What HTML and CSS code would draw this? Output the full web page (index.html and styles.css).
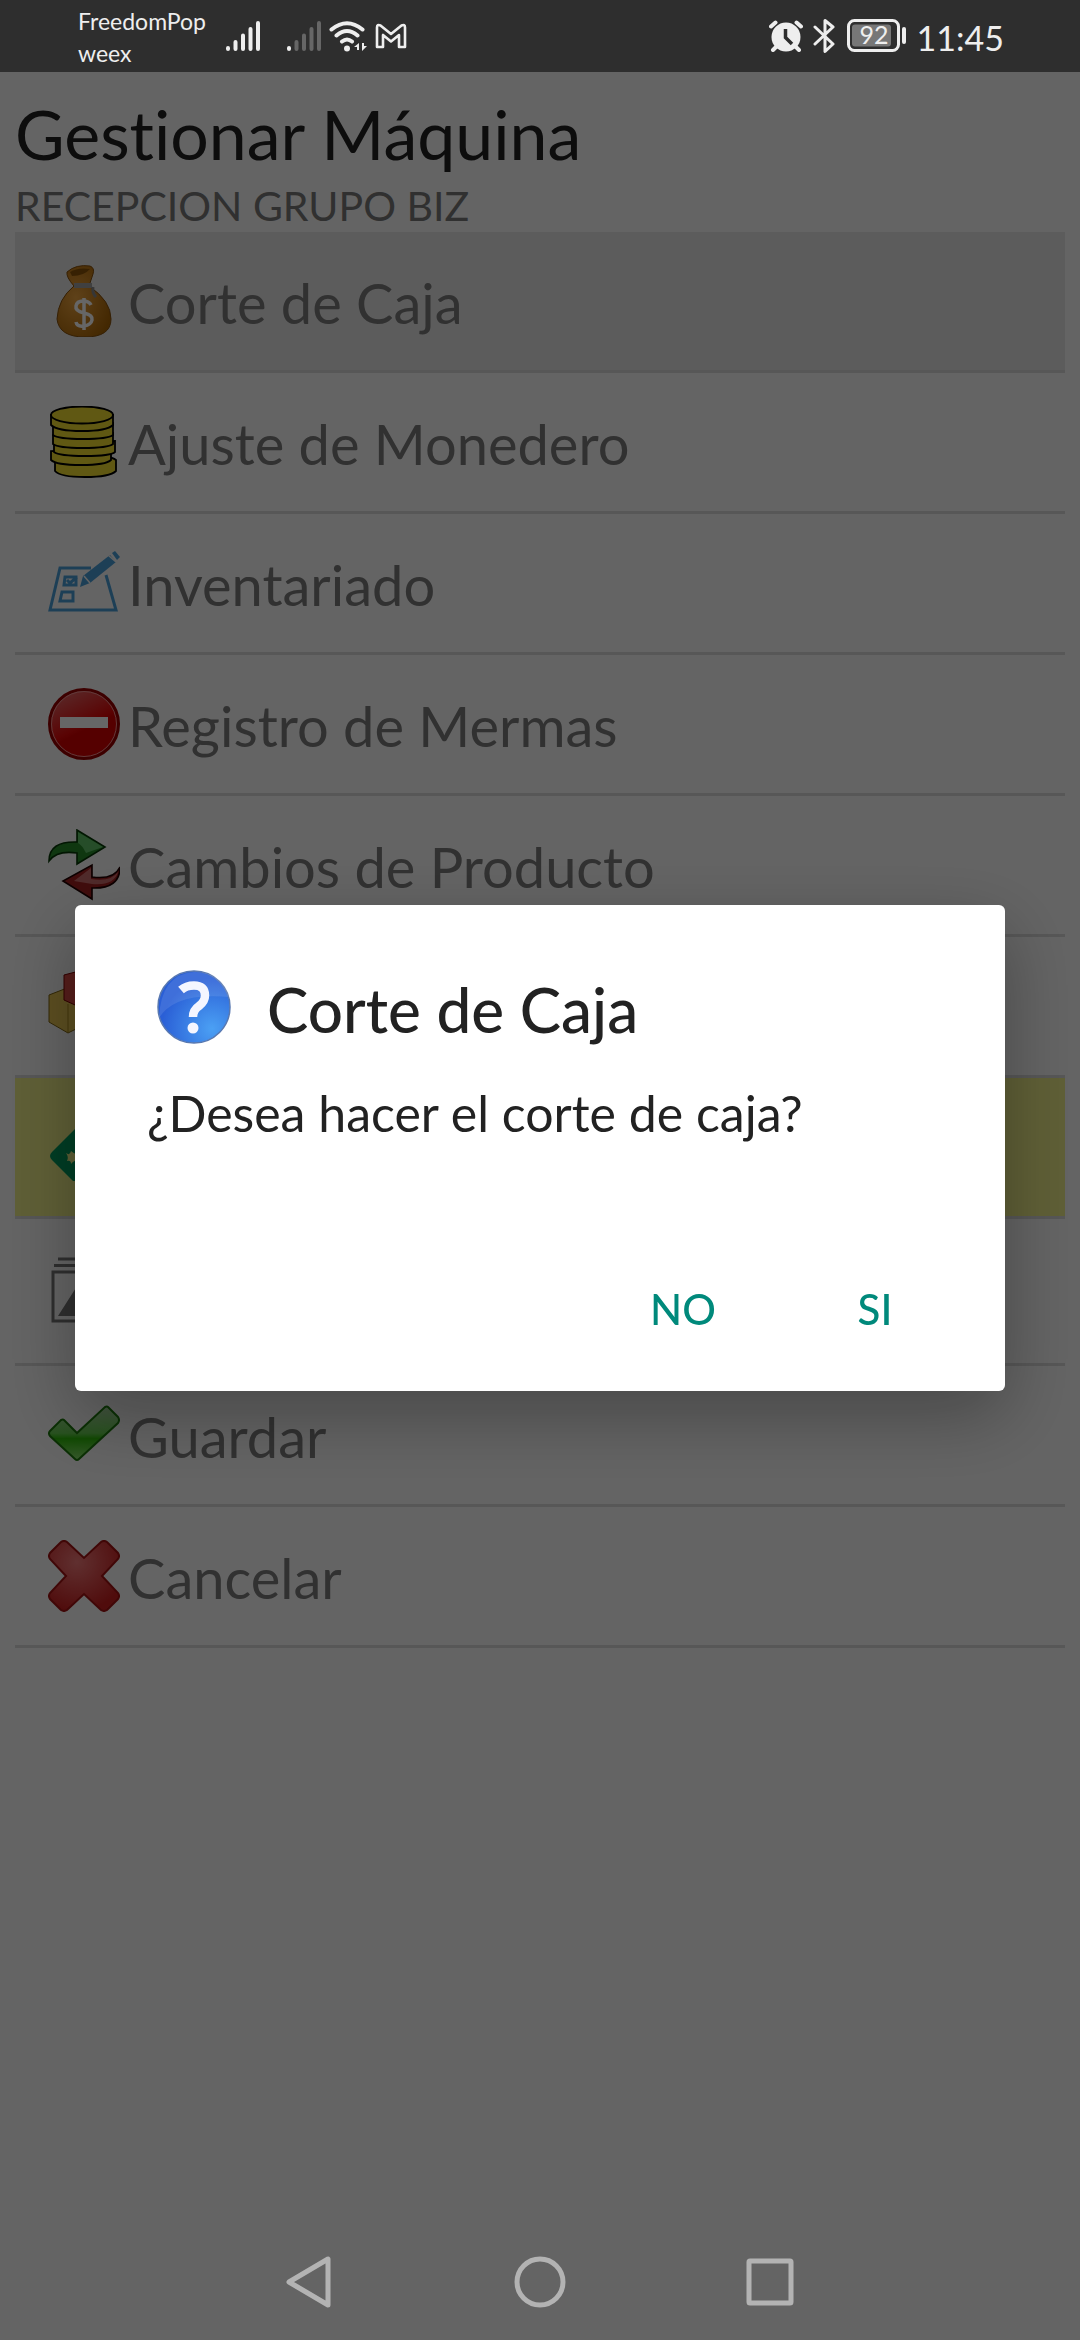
FILE: index.html
```html
<!DOCTYPE html>
<html lang="es">
<head>
<meta charset="utf-8">
<meta name="viewport" content="width=device-width, initial-scale=1">
<title>Gestionar Máquina</title>
<link rel="stylesheet" href="styles.css">
</head>
<body>
<header class="status">
  <div class="status-group">
    <p class="carrier">FreedomPop<br>weex</p>
    <svg class="signal" width="34" height="32" viewBox="0 0 34 32" fill="none" stroke="#eee" stroke-width="4" stroke-linecap="round"><path d="M2 28v1M9.500 22v7M17 15.500V29M24.500 9v20M32 3v26"/></svg>
    <svg class="signal signal-weak" width="34" height="32" viewBox="0 0 34 32" fill="none" stroke="#666" stroke-width="4" stroke-linecap="round"><path d="M2 28v1" stroke="#eee"/><path d="M9.500 22v7M17 15.500V29M24.500 9v20M32 3v26"/></svg>
    <svg class="wifi" width="38" height="32" viewBox="0 0 38 32" fill="none" stroke="#eee" stroke-width="4" stroke-linecap="round"><path d="M2.500 9.500Q18 -3 33.500 9.500M7.500 15.500Q18 6.500 28.500 15.500M13 21.500q5-4 10 0"/><circle cx="18" cy="28.500" r="3" fill="#eee" stroke="none"/><path d="M25 27l5-4v7h-2v-3zM38 26l-5 5v-8h2v3z" fill="#eee" stroke="none"/></svg>
    <svg class="mail" width="32" height="26" viewBox="0 0 32 26" fill="none" stroke="#eee" stroke-width="2.600" stroke-linejoin="round"><path d="M2 24V4.500Q2 1 5.500 2.500L16 11 26.500 2.500Q30 1 30 4.500V24h-6V12l-8 6.500L8 12v12z"/></svg>
  </div>
  <div class="status-group">
    <svg class="alarm" width="34" height="32" viewBox="0 0 34 32"><circle cx="17" cy="17" r="14.500" fill="#eee"/><path d="M2 6.500L6.500 2.500M32 6.500L27.500 2.500M7 27l-3 3M27 27l3 3" stroke="#eee" stroke-width="4" stroke-linecap="round"/><path d="M16.500 9v8.500l6.500 6.500" stroke="#2e2e2e" stroke-width="3.500" fill="none"/></svg>
    <svg class="bluetooth" width="22" height="36" viewBox="0 0 22 36" fill="none" stroke="#eee" stroke-width="3" stroke-linejoin="round" stroke-linecap="round"><path d="M2 9l18 17-8 7.500V2.500L20 9 2 26"/></svg>
    <svg class="battery" width="60" height="34" viewBox="0 0 60 34"><rect x="1.500" y="1.500" width="50" height="30" rx="6" fill="none" stroke="#eee" stroke-width="3"/><rect x="5" y="5.500" width="39" height="22" rx="3" fill="#777"/><rect x="55" y="8" width="4" height="17" rx="2" fill="#eee"/><text x="27" y="25" class="battery-level">92</text></svg>
    <time class="clock">11:45</time>
  </div>
</header>

<main class="app">
  <h1 class="title">Gestionar Máquina</h1>
  <p class="subtitle">RECEPCION GRUPO BIZ</p>
  <ul class="menu">
    <li class="item item-pressed"><button class="item-button" type="button">
      <svg class="icon" viewBox="0 0 72 72"><defs><radialGradient id="bag" cx=".35" cy=".45" r=".7"><stop offset="0" stop-color="#eda440"/><stop offset="1" stop-color="#a86404"/></radialGradient></defs><path d="M19 7Q28-1 42 1q5 2 3 8l-4 12q22 15 22 33 0 18-26 18T9 54q1-20 17-33Q18 12 19 7z" fill="url(#bag)" stroke="#85500e"/><path d="M22 7q8-5 20-3-6 7-18 7z" fill="#8a5408"/><path d="M26 18h18v5H26z" fill="#a0a0a0"/><path d="M45 22q-1 6 3 10" stroke="#888" stroke-width="3" fill="none"/><path d="M43 40q-2-4-8-4t-7 5 8 7 8 7-8 6-8-4M36 33v32" fill="none" stroke="#fff" stroke-width="3.500"/></svg>
      <span class="label">Corte de Caja</span></button></li>
    <li class="item"><button class="item-button" type="button">
      <svg class="icon" viewBox="0 0 72 72" fill="#f0dc30" stroke="#000" stroke-width="1.800"><path d="M7 56v9q5 6 30 6t31-6V54q-6-5-31-5T7 56z"/><path d="M3 45v9q5 5 30 5t30-5V43z"/><path d="M6 37v9q5 4 31 4t30-4V35z"/><path d="M5 29v9q5 4 30 4t30-4V27z"/><path d="M5 19v10q5 4 30 4t30-4V17z"/><path d="M3 9v10q6 6 31 6t31-6V9z"/><ellipse cx="34" cy="9" rx="31" ry="8.500"/></svg>
      <span class="label">Ajuste de Monedero</span></button></li>
    <li class="item"><button class="item-button" type="button">
      <svg class="icon" viewBox="0 0 72 72" fill="none" stroke="#4a9fd8" stroke-width="3"><path d="M43 21H12L2 63h66L58 28"/><path d="M17 30h11v8H16zM14 45h11v9H12zM19 33l3 3 7-6"/><path d="M32 40l3-11L62 8l6 7-26 21z" fill="#4a9fd8" stroke="none"/><path d="M64 6l3-2 5 6-3 3z" fill="#4a9fd8" stroke="none"/><path d="M36 29l6 7M60 8l8 7" stroke="#fafafa" stroke-width="1.500"/></svg>
      <span class="label">Inventariado</span></button></li>
    <li class="item"><button class="item-button" type="button">
      <svg class="icon" viewBox="0 0 72 72"><defs><linearGradient id="stop" x1=".2" y1="0" x2=".5" y2=".6"><stop offset="0" stop-color="#e06a6a"/><stop offset=".9" stop-color="#e00808"/><stop offset="1" stop-color="#d40000"/></linearGradient></defs><circle cx="36" cy="36" r="34.500" fill="url(#stop)" stroke="#980000" stroke-width="3"/><circle cx="36" cy="36" r="32.500" fill="none" stroke="#f09090"/><path d="M12 29h48v11H12z" fill="#fff"/></svg>
      <span class="label">Registro de Mermas</span></button></li>
    <li class="item"><button class="item-button" type="button">
      <svg class="icon" viewBox="0 0 72 72" stroke-width="1.600"><path d="M1 32Q1 12 29 13V1l28 17-28 17V24Q9 21 1 32z" fill="#268a2a" stroke="#063806"/><path d="M30 3l25 15-17 6q-4-8-8-10z" fill="#5fc066"/><path d="M72 38q0 22-28 21v11L15 52l29-16v12q22 3 28-10z" fill="#a02020" stroke="#200000"/><path d="M43 39v11q20 3 27-7-4 14-26 12L26 52z" fill="#c86a6a" stroke="none"/></svg>
      <span class="label">Cambios de Producto</span></button></li>
    <li class="item"><button class="item-button" type="button" aria-label="Productos">
      <svg class="icon" viewBox="0 0 72 72"><path d="M1 25l18-7 19 8v28l-18 9L1 52z" fill="#e6c452" stroke="#7f6410"/><path d="M20 34v28" stroke="#a8861c"/><path d="M16 5L35 0l20 7v26l-19 6-20-9z" fill="#d84a44" stroke="#7a0000"/></svg>
    </button></li>
    <li class="item item-marked"><button class="item-button" type="button" aria-label="Mantenimiento">
      <svg class="icon" viewBox="0 0 72 72"><path d="M4 41L32 13q4-4 8 0l28 28q4 4 0 8L47 70H25L4 49q-4-4 0-8z" fill="#009a5c"/><path d="M18 42q4 3 5-2 5 4 8 4v5q-5 0-8 4 0-4-4-3 2-4-1-8z" fill="#eeee88"/></svg>
    </button></li>
    <li class="item item-tall"><button class="item-button" type="button" aria-label="Imágenes">
      <svg class="icon" viewBox="0 0 72 72" fill="none" stroke="#757575" stroke-width="3"><path d="M10 4h52M6 10.500h60M5 17h62v49H5z"/><path d="M10 61l21-33 12 19 7-9 14 23z" fill="#757575" stroke="none"/></svg>
    </button></li>
    <li class="item"><button class="item-button" type="button">
      <svg class="icon" viewBox="0 0 72 72"><defs><linearGradient id="ok" x1="0" y1="0" x2="0" y2="1"><stop offset="0" stop-color="#a8d0a0"/><stop offset=".5" stop-color="#66cc50"/><stop offset=".6" stop-color="#2cb808"/><stop offset="1" stop-color="#8ce070"/></linearGradient></defs><path d="M2 32l11-11q2-1 3 0l13 13L57 8q2-1 3 0l10 10q2 3 0 6L31 60q-2 2-4 0L2 37q-2-3 0-5z" fill="url(#ok)" stroke="#1c780c" stroke-width="2"/></svg>
      <span class="label">Guardar</span></button></li>
    <li class="item"><button class="item-button" type="button">
      <svg class="icon" viewBox="0 0 72 72"><defs><radialGradient id="no" cx=".4" cy=".3" r=".7"><stop offset="0" stop-color="#f07878"/><stop offset="1" stop-color="#c82020"/></radialGradient></defs><path d="M13 2q3-2 6 0l17 16L53 2q3-2 6 0l11 11q2 3 0 6L54 36l16 17q2 3 0 6L59 70q-3 2-6 0L36 54 19 70q-3 2-6 0L2 59q-2-3 0-6l16-17L2 19q-2-3 0-6z" fill="url(#no)" stroke="#a01212" stroke-width="2"/></svg>
      <span class="label">Cancelar</span></button></li>
  </ul>
</main>

<div class="scrim">
  <section class="dialog" role="alertdialog" aria-modal="true" aria-labelledby="dialog-title" aria-describedby="dialog-text">
    <div class="dialog-head">
      <svg class="dialog-icon" viewBox="0 0 74 74"><defs><radialGradient id="ask" cx=".75" cy=".8" r=".7"><stop offset="0" stop-color="#4ba0f4"/><stop offset="1" stop-color="#2a5fd6"/></radialGradient></defs><circle cx="37" cy="37" r="36" fill="url(#ask)" stroke="#5878b0" stroke-width="1.500"/><path d="M2 48Q18 22 72 27 66 2 37 2 4 4 2 48z" fill="#fff" opacity=".1"/><path d="M24 20q5-4.500 13-4.500 11 0 11 10 0 6-6 10.500-6 4-6 11" fill="none" stroke="#f4f6ff" stroke-width="8.500"/><circle cx="36" cy="58" r="5.500" fill="#f4f6ff"/></svg>
      <h2 class="dialog-title" id="dialog-title">Corte de Caja</h2>
    </div>
    <p class="dialog-text" id="dialog-text">¿Desea hacer el corte de caja?</p>
    <div class="dialog-actions">
      <button class="action" type="button">NO</button>
      <button class="action" type="button">SI</button>
    </div>
  </section>
</div>

<nav class="navbar" aria-label="Sistema">
  <button class="nav-button" type="button" aria-label="Atrás"><svg width="52" height="52" viewBox="0 0 52 52"><path d="M5 26L44 3v46z"/></svg></button>
  <button class="nav-button" type="button" aria-label="Inicio"><svg width="52" height="52" viewBox="0 0 52 52"><circle cx="26" cy="26" r="23"/></svg></button>
  <button class="nav-button" type="button" aria-label="Recientes"><svg width="52" height="52" viewBox="0 0 52 52"><rect x="5" y="5" width="42" height="42" rx="1"/></svg></button>
</nav>
</body>
</html>
```

FILE: styles.css
```css
* {
  box-sizing: border-box;
}

body {
  margin: 0;
  min-height: 100vh;
  display: flex;
  flex-direction: column;
  background: #fafafa;
  font-family: Lato, "Open Sans", sans-serif;
  font-variant-ligatures: none;
}

h1, h2, p, ul {
  margin: 0;
  padding: 0;
  font-weight: 400;
}

button {
  border: 0;
  padding: 0;
  background: none;
  font: inherit;
  color: inherit;
}

svg {
  display: block;
  flex: none;
}

/* System bars stay above the scrim */
.status {
  position: relative;
  z-index: 2;
  display: flex;
  justify-content: space-between;
  height: 72px;
  padding: 0 76px 0 78px;
  background: #2e2e2e;
  color: #eee;
}

.status-group {
  display: flex;
  align-items: center;
}

.carrier {
  width: 148px;
  padding-top: 2px;
  font-size: 23px;
  line-height: 32px;
}

.signal-weak {
  margin-left: 27px;
}

.wifi,
.mail {
  margin-left: 8px;
}

.bluetooth {
  margin-left: 10px;
}

.battery {
  margin-left: 12px;
}

.battery-level {
  font-size: 25px;
  fill: #eee;
  text-anchor: middle;
}

.clock {
  margin-left: 10px;
  padding-top: 2px;
  font-size: 34px;
}

.app {
  flex: 1;
  padding: 20px 15px 0;
}

.title {
  font-size: 68px;
  line-height: 84px;
  color: #222;
}

.subtitle {
  padding-top: 4px;
  font-size: 41px;
  line-height: 52px;
  color: #787878;
}

.menu {
  list-style: none;
}

.item {
  border-bottom: 3px solid #d9d9d9;
  font-size: 56px;
  color: #7b7b7b;
}

.item-pressed {
  background: #e6e6e6;
}

.item-marked {
  background: #eeee88;
}

.item-button {
  display: flex;
  align-items: center;
  gap: 8px;
  width: 100%;
  height: 138px;
  padding-left: 33px;
  text-align: left;
}

.item-tall .item-button {
  height: 144px;
}

.label {
  padding-top: 2px;
}

.icon {
  width: 72px;
  height: 72px;
}

.scrim {
  position: fixed;
  inset: 0;
  z-index: 1;
  display: flex;
  align-items: center;
  padding: 72px 75px 116px;
  background: rgba(0, 0, 0, 0.6);
}

.dialog {
  flex: 1;
  padding: 64px 42px 22px 72px;
  border-radius: 6px;
  background: #fff;
  box-shadow: 0 24px 72px rgba(0, 0, 0, 0.3);
  color: #222;
}

.dialog-head {
  display: flex;
  align-items: center;
  gap: 36px;
  padding-left: 10px;
}

.dialog-title {
  padding-top: 4px;
  font-size: 62px;
  font-weight: 500;
  line-height: 72px;
}

.dialog-icon {
  width: 74px;
  height: 74px;
}

.dialog-text {
  margin-top: 38px;
  font-size: 50px;
  line-height: 60px;
}

.dialog-actions {
  display: flex;
  justify-content: flex-end;
  gap: 16px;
  margin-top: 106px;
}

.action {
  width: 176px;
  height: 120px;
  font-size: 42px;
  font-weight: 500;
  color: #00897b;
}

.navbar {
  position: relative;
  z-index: 2;
  display: flex;
  justify-content: center;
  gap: 178px;
  height: 116px;
}

.nav-button svg {
  fill: none;
  stroke: #b3b3b3;
  stroke-width: 5;
  stroke-linejoin: round;
}
```
